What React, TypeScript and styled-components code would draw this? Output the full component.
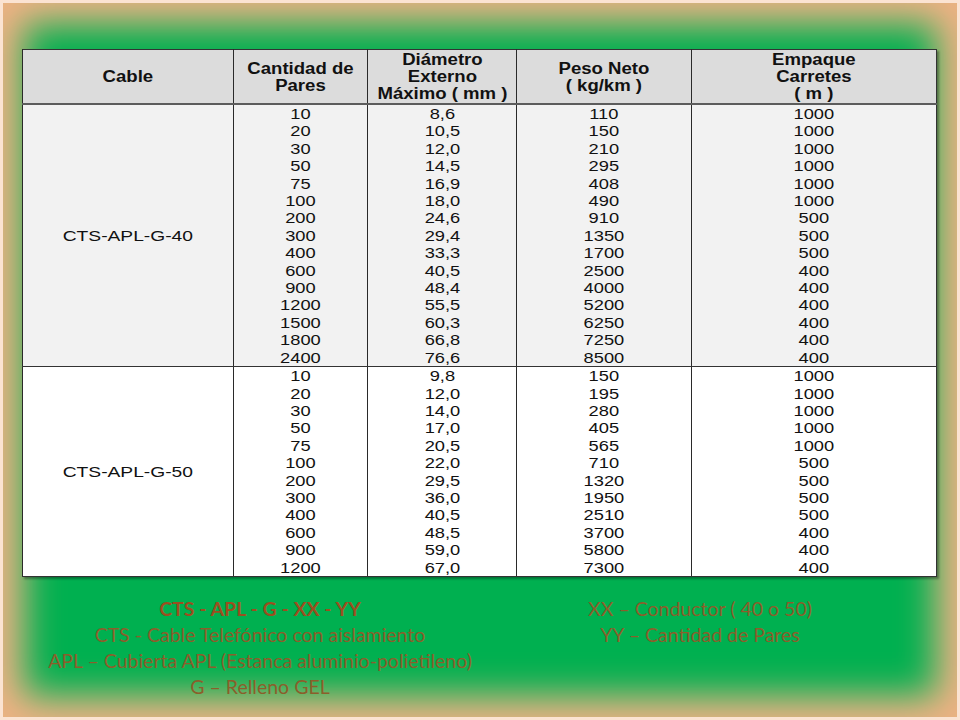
import React from "react";
import styled, { createGlobalStyle } from "styled-components";

const GlobalStyle = createGlobalStyle`
  html, body { margin: 0; padding: 0; background: #ffffff; }
`;

const Slide = styled.div`
  width: 960px;
  height: 720px;
  box-sizing: border-box;
  padding: 49px 23px 0 22px;
  background: #00b050;
  box-shadow: inset 0 0 0 3px #fbe3d2, inset 0 0 36px 24px #efb284;
  overflow: hidden;
`;

const Table = styled.table`
  border-collapse: collapse;
  table-layout: fixed;
  font-family: "Liberation Sans", Arial, sans-serif;
  color: #111111;
  box-shadow: 2px 2px 2px rgba(0, 0, 0, 0.35);
  border: 1px solid #333333;
`;

const HeadCell = styled.th<{ $w: number }>`
  width: ${(p) => p.$w}px;
  height: 53px;
  padding: 0;
  background: #dcdcdc;
  border-left: 1px solid #2a2a2a;
  border-bottom: 2px solid #5c5c5c;
  font-size: 16px;
  font-weight: bold;
  line-height: 17px;
  text-align: center;
  vertical-align: middle;
`;

const Cell = styled.td<{ $shade: boolean }>`
  padding: 0;
  background: ${(p) => (p.$shade ? "#f2f2f2" : "#ffffff")};
  border-left: 1px solid #2a2a2a;
  border-bottom: 1px solid #333333;
  text-align: center;
  vertical-align: middle;
  font-size: 15.5px;
  line-height: 17.4px;
`;

const Stretch = styled.div<{ $k: number }>`
  transform: scaleX(${(p) => p.$k});
  transform-origin: center;
`;

const Notes = styled.div`
  display: grid;
  grid-template-columns: 440px 440px;
  justify-content: center;
  margin-top: 19px;
  margin-left: -22px;
  margin-right: -23px;
  font-family: Lato, "Open Sans", sans-serif;
  font-size: 19.5px;
  line-height: 26px;
  text-align: center;
`;

const NoteLine = styled.div<{ $bold?: boolean }>`
  font-weight: ${(p) => (p.$bold ? 700 : 400)};
  color: ${(p) => (p.$bold ? "#9b4f1f" : "#8b5e2b")};
`;

type Group = {
  cable: string;
  pares: string[];
  diam: string[];
  peso: string[];
  empaque: string[];
};

const groups: Group[] = [
  {
    cable: "CTS-APL-G-40",
    pares: ["10", "20", "30", "50", "75", "100", "200", "300", "400", "600", "900", "1200", "1500", "1800", "2400"],
    diam: ["8,6", "10,5", "12,0", "14,5", "16,9", "18,0", "24,6", "29,4", "33,3", "40,5", "48,4", "55,5", "60,3", "66,8", "76,6"],
    peso: ["110", "150", "210", "295", "408", "490", "910", "1350", "1700", "2500", "4000", "5200", "6250", "7250", "8500"],
    empaque: ["1000", "1000", "1000", "1000", "1000", "1000", "500", "500", "500", "400", "400", "400", "400", "400", "400"],
  },
  {
    cable: "CTS-APL-G-50",
    pares: ["10", "20", "30", "50", "75", "100", "200", "300", "400", "600", "900", "1200"],
    diam: ["9,8", "12,0", "14,0", "17,0", "20,5", "22,0", "29,5", "36,0", "40,5", "48,5", "59,0", "67,0"],
    peso: ["150", "195", "280", "405", "565", "710", "1320", "1950", "2510", "3700", "5800", "7300"],
    empaque: ["1000", "1000", "1000", "1000", "1000", "500", "500", "500", "500", "400", "400", "400"],
  },
];

const headers: { w: number; lines: string[] }[] = [
  { w: 210, lines: ["Cable"] },
  { w: 133, lines: ["Cantidad de", "Pares"] },
  { w: 149, lines: ["Diámetro", "Externo", "Máximo ( mm )"] },
  { w: 174, lines: ["Peso Neto", "( kg/km )"] },
  { w: 244, lines: ["Empaque", "Carretes", "( m )"] },
];

function Values({ items, shade }: { items: string[]; shade: boolean }) {
  return (
    <Cell $shade={shade}>
      <Stretch $k={1.18}>
        {items.map((v, i) => (
          <div key={i}>{v}</div>
        ))}
      </Stretch>
    </Cell>
  );
}

export default function App() {
  return (
    <>
      <GlobalStyle />
      <Slide>
        <Table>
          <thead>
            <tr>
              {headers.map((h) => (
                <HeadCell key={h.lines[0]} $w={h.w}>
                  <Stretch $k={1.16}>
                    {h.lines.map((l) => (
                      <div key={l}>{l}</div>
                    ))}
                  </Stretch>
                </HeadCell>
              ))}
            </tr>
          </thead>
          <tbody>
            {groups.map((g, i) => {
              const shade = i === 0;
              return (
                <tr key={g.cable}>
                  <Cell $shade={shade}>
                    <Stretch $k={1.24}>{g.cable}</Stretch>
                  </Cell>
                  <Values items={g.pares} shade={shade} />
                  <Values items={g.diam} shade={shade} />
                  <Values items={g.peso} shade={shade} />
                  <Values items={g.empaque} shade={shade} />
                </tr>
              );
            })}
          </tbody>
        </Table>
        <Notes>
          <div>
            <NoteLine $bold>CTS - APL - G - XX - YY</NoteLine>
            <NoteLine>CTS - Cable Telefónico con aislamiento</NoteLine>
            <NoteLine>APL – Cubierta APL (Estanca aluminio-polietileno)</NoteLine>
            <NoteLine>G – Relleno GEL</NoteLine>
          </div>
          <div>
            <NoteLine>XX – Conductor ( 40 o 50)</NoteLine>
            <NoteLine>YY – Cantidad de Pares</NoteLine>
          </div>
        </Notes>
      </Slide>
    </>
  );
}
